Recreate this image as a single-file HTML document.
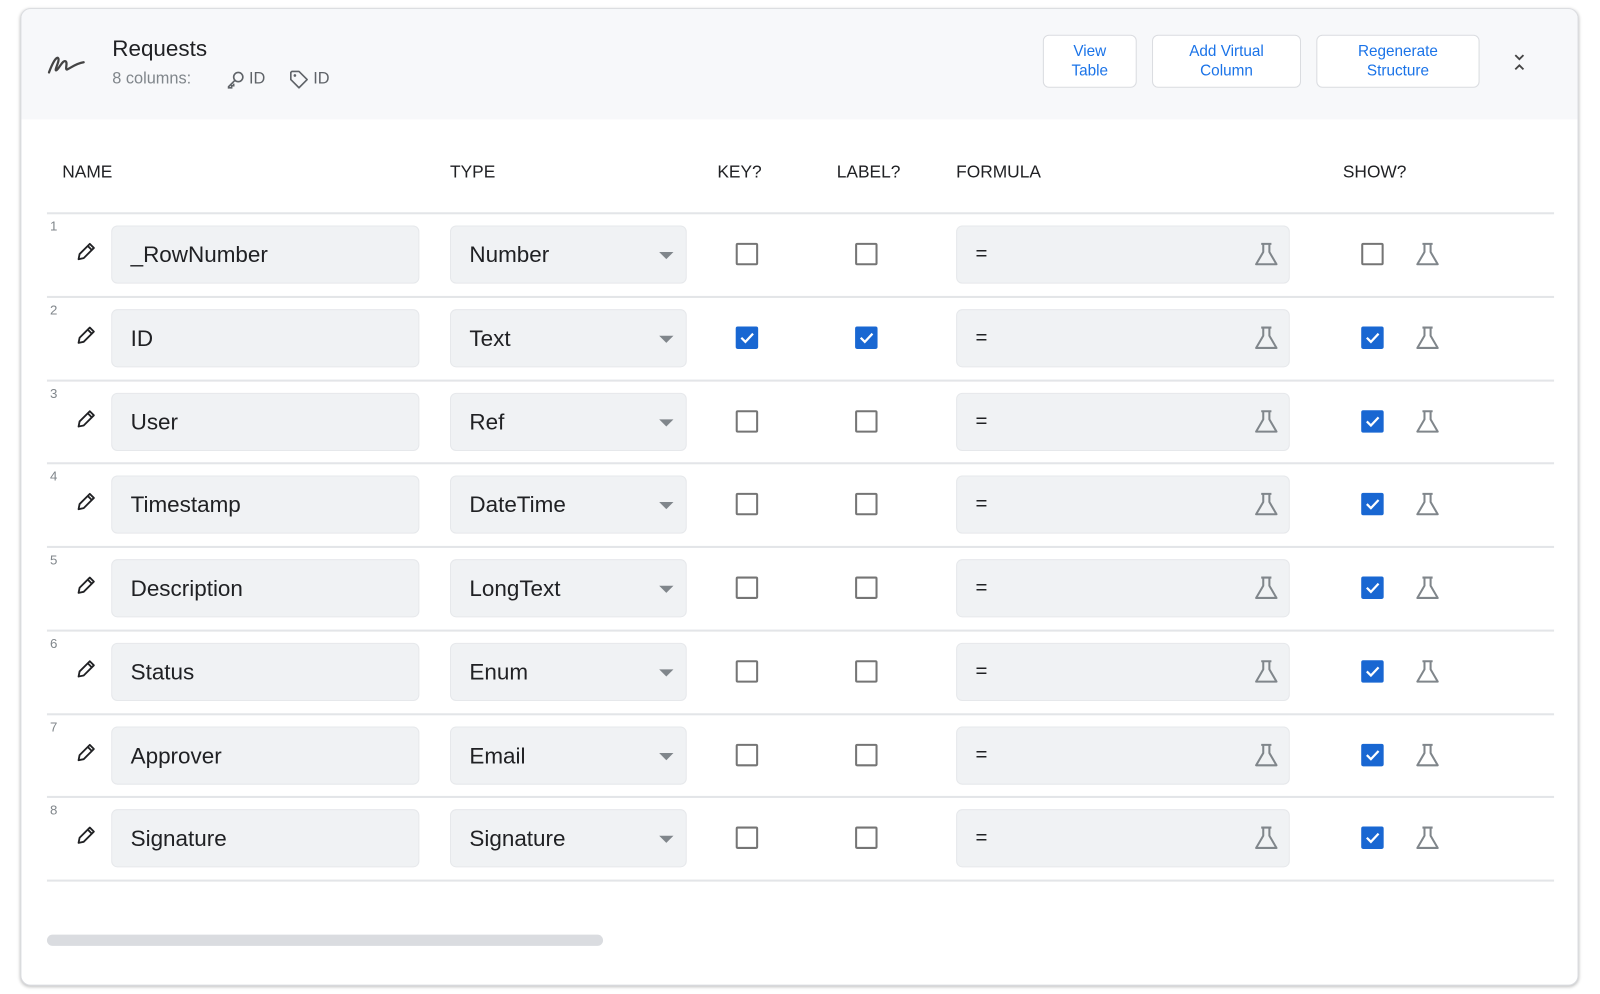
<!DOCTYPE html>
<html><head><meta charset="utf-8"><style>
*{box-sizing:border-box;margin:0;padding:0}
body{width:1600px;height:994px;background:#fff;font-family:"Liberation Sans",sans-serif;position:relative;overflow:hidden}
#wrap{position:absolute;left:0;top:0;width:1568px;height:974px;transform:scale(1.0204);transform-origin:0 0}
.card{position:absolute;left:20px;top:8px;width:1527px;height:958px;border:1px solid #dadce0;border-radius:10px;box-shadow:0 1px 3px rgba(0,0,0,.25);overflow:hidden;background:#fff}
.hdr{position:absolute;left:0;top:0;width:100%;height:108px;background:#f7f8fa}
.abs{position:absolute}
.btn{position:absolute;top:25px;height:52px;border:1px solid #dadce0;border-radius:6px;background:#fff;color:#1a73e8;font-size:15px;line-height:19px;text-align:center;display:flex;align-items:center;justify-content:center}
.th{position:absolute;top:150px;font-size:17px;color:#202124}
.line{position:absolute;left:45px;width:1477px;height:2px;background:#e3e5e8}
.inp{position:absolute;height:57px;background:#f0f2f4;border:1px solid #e6e8eb;border-radius:6px;font-size:22px;color:#202124;line-height:55px;padding-left:18px}
.num{position:absolute;left:48px;font-size:13px;color:#80868b}
.cb{position:absolute;width:22px;height:22px;border:2px solid #757575;border-radius:2px}
.cb.on{background:#1967d2;border-color:#1967d2}
.tri{position:absolute;width:0;height:0;border-left:7px solid transparent;border-right:7px solid transparent;border-top:7px solid #80868b}
</style></head><body>
<div id="wrap">
<div class="card">
<div class="hdr"></div>
<svg class="abs" style="left:24px;top:38px" width="40" height="28" viewBox="0 0 40 28"><path d="M3 24 C6 16 10 8 12 10 C14 12 8 22 10 22 C12 22 16 12 19 13 C22 14 18 22 21 21 C25 19 30 15 37 14" fill="none" stroke="#444" stroke-width="2.2" stroke-linecap="round"/></svg>
<div class="abs" style="left:89px;top:26px;font-size:22px;color:#202124">Requests</div>
<div class="abs" style="left:89px;top:60px;font-size:16px;color:#80868b">8 columns:</div>
<svg class="abs" style="left:200px;top:59px" width="20" height="20" viewBox="0 0 20 20"><circle cx="12.5" cy="7.5" r="4.5" fill="none" stroke="#5f6368" stroke-width="1.6"/><path d="M9.5 10.5 L3 17 L3 18 L6 18 L6 16 L8 16 L8 14" fill="none" stroke="#5f6368" stroke-width="1.6"/></svg>
<div class="abs" style="left:223px;top:60px;font-size:16px;color:#5f6368">ID</div>
<svg class="abs" style="left:262px;top:59px" width="20" height="20" viewBox="0 0 20 20"><path d="M2 3 L2 10 L10 18 L18 10 L10 2 L3 2 Z" fill="none" stroke="#5f6368" stroke-width="1.6" stroke-linejoin="round"/><circle cx="6" cy="6" r="1.3" fill="#5f6368"/></svg>
<div class="abs" style="left:286px;top:60px;font-size:16px;color:#5f6368">ID</div>
<div class="btn" style="left:1001px;width:92px">View<br>Table</div>
<div class="btn" style="left:1108px;width:146px">Add Virtual<br>Column</div>
<div class="btn" style="left:1269px;width:160px">Regenerate<br>Structure</div>
<svg class="abs" style="left:1461px;top:42px" width="14" height="20" viewBox="0 0 14 20"><path d="M3 3 L7 7 L11 3 M3 17 L7 13 L11 17" fill="none" stroke="#444" stroke-width="1.8"/></svg>
<div class="th" style="left:40px">NAME</div>
<div class="th" style="left:420px">TYPE</div>
<div class="th" style="left:682px">KEY?</div>
<div class="th" style="left:799px">LABEL?</div>
<div class="th" style="left:916px">FORMULA</div>
<div class="th" style="left:1295px">SHOW?</div>
<div id="rows"></div>
<div class="abs" style="left:25px;top:907px;width:545px;height:11px;border-radius:6px;background:#dadce0"></div>
</div>
</div>
<script>
var d=[["_RowNumber","Number",0,0,0],["ID","Text",1,1,1],["User","Ref",0,0,1],["Timestamp","DateTime",0,0,1],["Description","LongText",0,0,1],["Status","Enum",0,0,1],["Approver","Email",0,0,1],["Signature","Signature",0,0,1]];
var flask='<svg width="26" height="24" viewBox="0 0 26 24"><path d="M8 2 H18 M10 2 V10 L3 22 H23 L16 10 V2" fill="none" stroke="#80868b" stroke-width="2" stroke-linejoin="round"/></svg>';
var chk='<svg width="18" height="18" viewBox="0 0 18 18" style="position:absolute;left:0;top:0"><path d="M3.5 9 L7.5 13 L15 5" fill="none" stroke="#fff" stroke-width="2.2"/></svg>';
var h='';
for(var i=0;i<8;i++){var t=Math.round(199+i*81.75);var r=d[i];
h+='<div class="line" style="left:25px;top:'+t+'px"></div>';
h+='<div class="num" style="left:28px;top:'+(t+6)+'px">'+(i+1)+'</div>';
h+='<svg class="abs" style="left:53px;top:'+(t+29)+'px" width="20" height="20" viewBox="0 0 20 20"><path d="M3 17 L4 12 L14 2 L18 6 L8 16 Z M12 4 L16 8" fill="none" stroke="#202124" stroke-width="1.8" stroke-linejoin="round"/></svg>';
h+='<div class="inp" style="left:88px;top:'+(t+13)+'px;width:302px">'+r[0]+'</div>';
h+='<div class="inp" style="left:420px;top:'+(t+13)+'px;width:232px">'+r[1]+'</div>';
h+='<div class="tri" style="left:625px;top:'+(t+39)+'px"></div>';
h+='<div class="cb'+(r[2]?' on':'')+'" style="left:700px;top:'+(t+30)+'px">'+(r[2]?chk:'')+'</div>';
h+='<div class="cb'+(r[3]?' on':'')+'" style="left:817px;top:'+(t+30)+'px">'+(r[3]?chk:'')+'</div>';
h+='<div class="inp" style="left:916px;top:'+(t+13)+'px;width:327px;font-size:20px">=</div>';
h+='<div class="abs" style="left:1207px;top:'+(t+29)+'px">'+flask+'</div>';
h+='<div class="cb'+(r[4]?' on':'')+'" style="left:1313px;top:'+(t+30)+'px">'+(r[4]?chk:'')+'</div>';
h+='<div class="abs" style="left:1365px;top:'+(t+29)+'px">'+flask+'</div>';}
h+='<div class="line" style="left:25px;top:853px"></div>';
document.getElementById('rows').innerHTML=h;
</script>
</body></html>
